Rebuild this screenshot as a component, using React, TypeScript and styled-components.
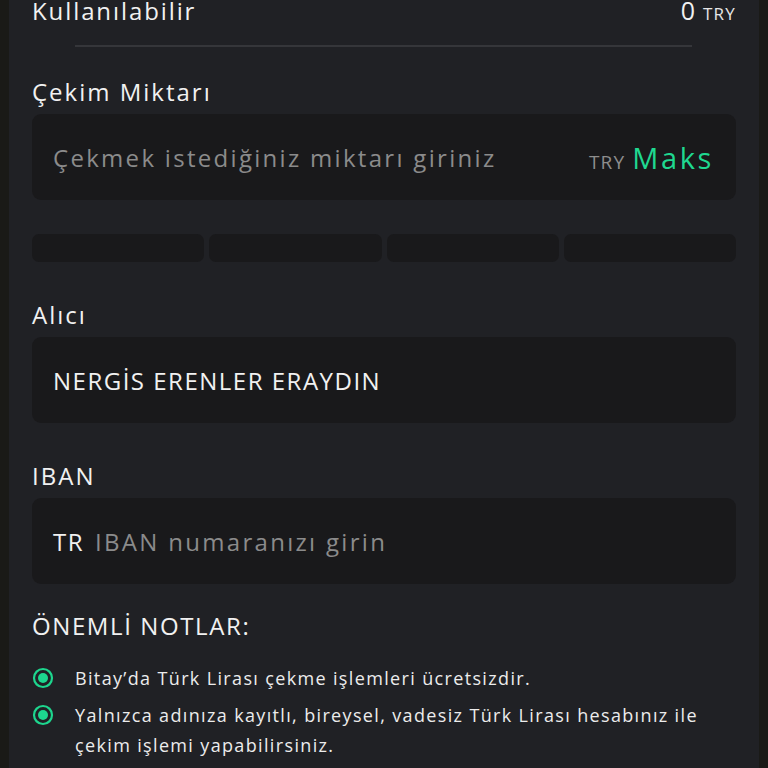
import React from "react";
import styled, { createGlobalStyle } from "styled-components";

const GlobalStyle = createGlobalStyle`
  html, body {
    margin: 0;
    padding: 0;
    background: #1a1a17;
    font-family: "Open Sans", "Noto Sans", sans-serif;
    color: #f1f1f1;
    overflow: hidden;
  }
`;

const Page = styled.div`
  padding: 0 9px;
  height: 768px;
`;

const Panel = styled.div`
  background: #202125;
  height: 100%;
  padding: 0 23px;
  display: flex;
  flex-direction: column;
`;

const BalanceRow = styled.div`
  margin-top: -6px;
  height: 32px;
  display: flex;
  align-items: center;
  justify-content: space-between;
  font-size: 24px;
  letter-spacing: 1.9px;
`;

const BalanceValue = styled.div`
  display: flex;
  align-items: baseline;
  gap: 8px;
  font-size: 25px;
  letter-spacing: 0;
`;

const Unit = styled.span<{ $size?: number; $tone?: string }>`
  font-size: ${(p) => p.$size ?? 17}px;
  color: ${(p) => p.$tone ?? "#e6e6e6"};
  letter-spacing: 1.2px;
`;

const Divider = styled.div`
  margin: 19px 44px 29px 43px;
  height: 2px;
  background: #35363a;
`;

const Label = styled.div<{ $gap?: number }>`
  margin-top: ${(p) => p.$gap ?? 0}px;
  height: 32px;
  line-height: 32px;
  font-size: 24px;
  letter-spacing: 2px;
  color: #f1f1f1;
`;

const InputBox = styled.div`
  margin-top: 6px;
  height: 86px;
  border-radius: 9px;
  background: #19191b;
  display: flex;
  align-items: center;
  padding: 0 24px 0 21px;
  font-size: 24px;
`;

const Placeholder = styled.span`
  color: #8b8b8b;
  flex: 1;
  letter-spacing: 2.3px;
`;

const Value = styled.span`
  color: #f1f1f1;
  letter-spacing: 1.5px;
`;

const Prefix = styled.span`
  color: #f1f1f1;
  margin-right: 11px;
  letter-spacing: 1.5px;
`;

const Suffix = styled.div`
  display: flex;
  align-items: baseline;
  gap: 7px;
`;

const Maks = styled.span`
  color: #1fd890;
  font-size: 29px;
  font-weight: 500;
  letter-spacing: 2.6px;
  margin-right: -2px;
`;

const PercentRow = styled.div`
  margin-top: 34px;
  display: grid;
  grid-template-columns: repeat(4, 1fr);
  gap: 5px;
`;

const PercentButton = styled.div`
  height: 28px;
  border-radius: 7px;
  background: #19191b;
`;

const NotesTitle = styled.div`
  margin-top: 26px;
  height: 32px;
  line-height: 32px;
  font-size: 24px;
  font-weight: 500;
  letter-spacing: 1.6px;
`;

const NotesList = styled.ul`
  list-style: none;
  margin: 21px 0 0;
  padding: 0;
  display: flex;
  flex-direction: column;
  gap: 7px;
`;

const Note = styled.li`
  display: flex;
  align-items: flex-start;
  font-size: 18px;
  line-height: 30px;
  letter-spacing: 1.35px;
  color: #ececec;
`;

const Bullet = styled.span`
  flex: none;
  width: 43px;
  height: 30px;
  display: flex;
  align-items: center;
`;

const BulletIcon = () => (
  <svg width="22" height="22" viewBox="0 0 22 22">
    <circle cx="11" cy="11" r="9" fill="none" stroke="#1dd68e" strokeWidth="2.2" />
    <circle cx="11" cy="11" r="5" fill="#1dd68e" />
  </svg>
);

export default function App() {
  return (
    <>
      <GlobalStyle />
      <Page>
        <Panel>
          <BalanceRow>
            <span>Kullanılabilir</span>
            <BalanceValue>
              0 <Unit>TRY</Unit>
            </BalanceValue>
          </BalanceRow>
          <Divider />
          <Label>Çekim Miktarı</Label>
          <InputBox>
            <Placeholder>Çekmek istediğiniz miktarı giriniz</Placeholder>
            <Suffix>
              <Unit $size={19} $tone="#8d8d8d">TRY</Unit>
              <Maks>Maks</Maks>
            </Suffix>
          </InputBox>
          <PercentRow>
            <PercentButton />
            <PercentButton />
            <PercentButton />
            <PercentButton />
          </PercentRow>
          <Label $gap={37}>Alıcı</Label>
          <InputBox>
            <Value>NERGİS ERENLER ERAYDIN</Value>
          </InputBox>
          <Label $gap={37}>IBAN</Label>
          <InputBox>
            <Prefix>TR</Prefix>
            <Placeholder>IBAN numaranızı girin</Placeholder>
          </InputBox>
          <NotesTitle>ÖNEMLİ NOTLAR:</NotesTitle>
          <NotesList>
            <Note>
              <Bullet>
                <BulletIcon />
              </Bullet>
              <span>Bitay’da Türk Lirası çekme işlemleri ücretsizdir.</span>
            </Note>
            <Note>
              <Bullet>
                <BulletIcon />
              </Bullet>
              <span>
                Yalnızca adınıza kayıtlı, bireysel, vadesiz Türk Lirası hesabınız ile çekim işlemi yapabilirsiniz.
              </span>
            </Note>
          </NotesList>
        </Panel>
      </Page>
    </>
  );
}
